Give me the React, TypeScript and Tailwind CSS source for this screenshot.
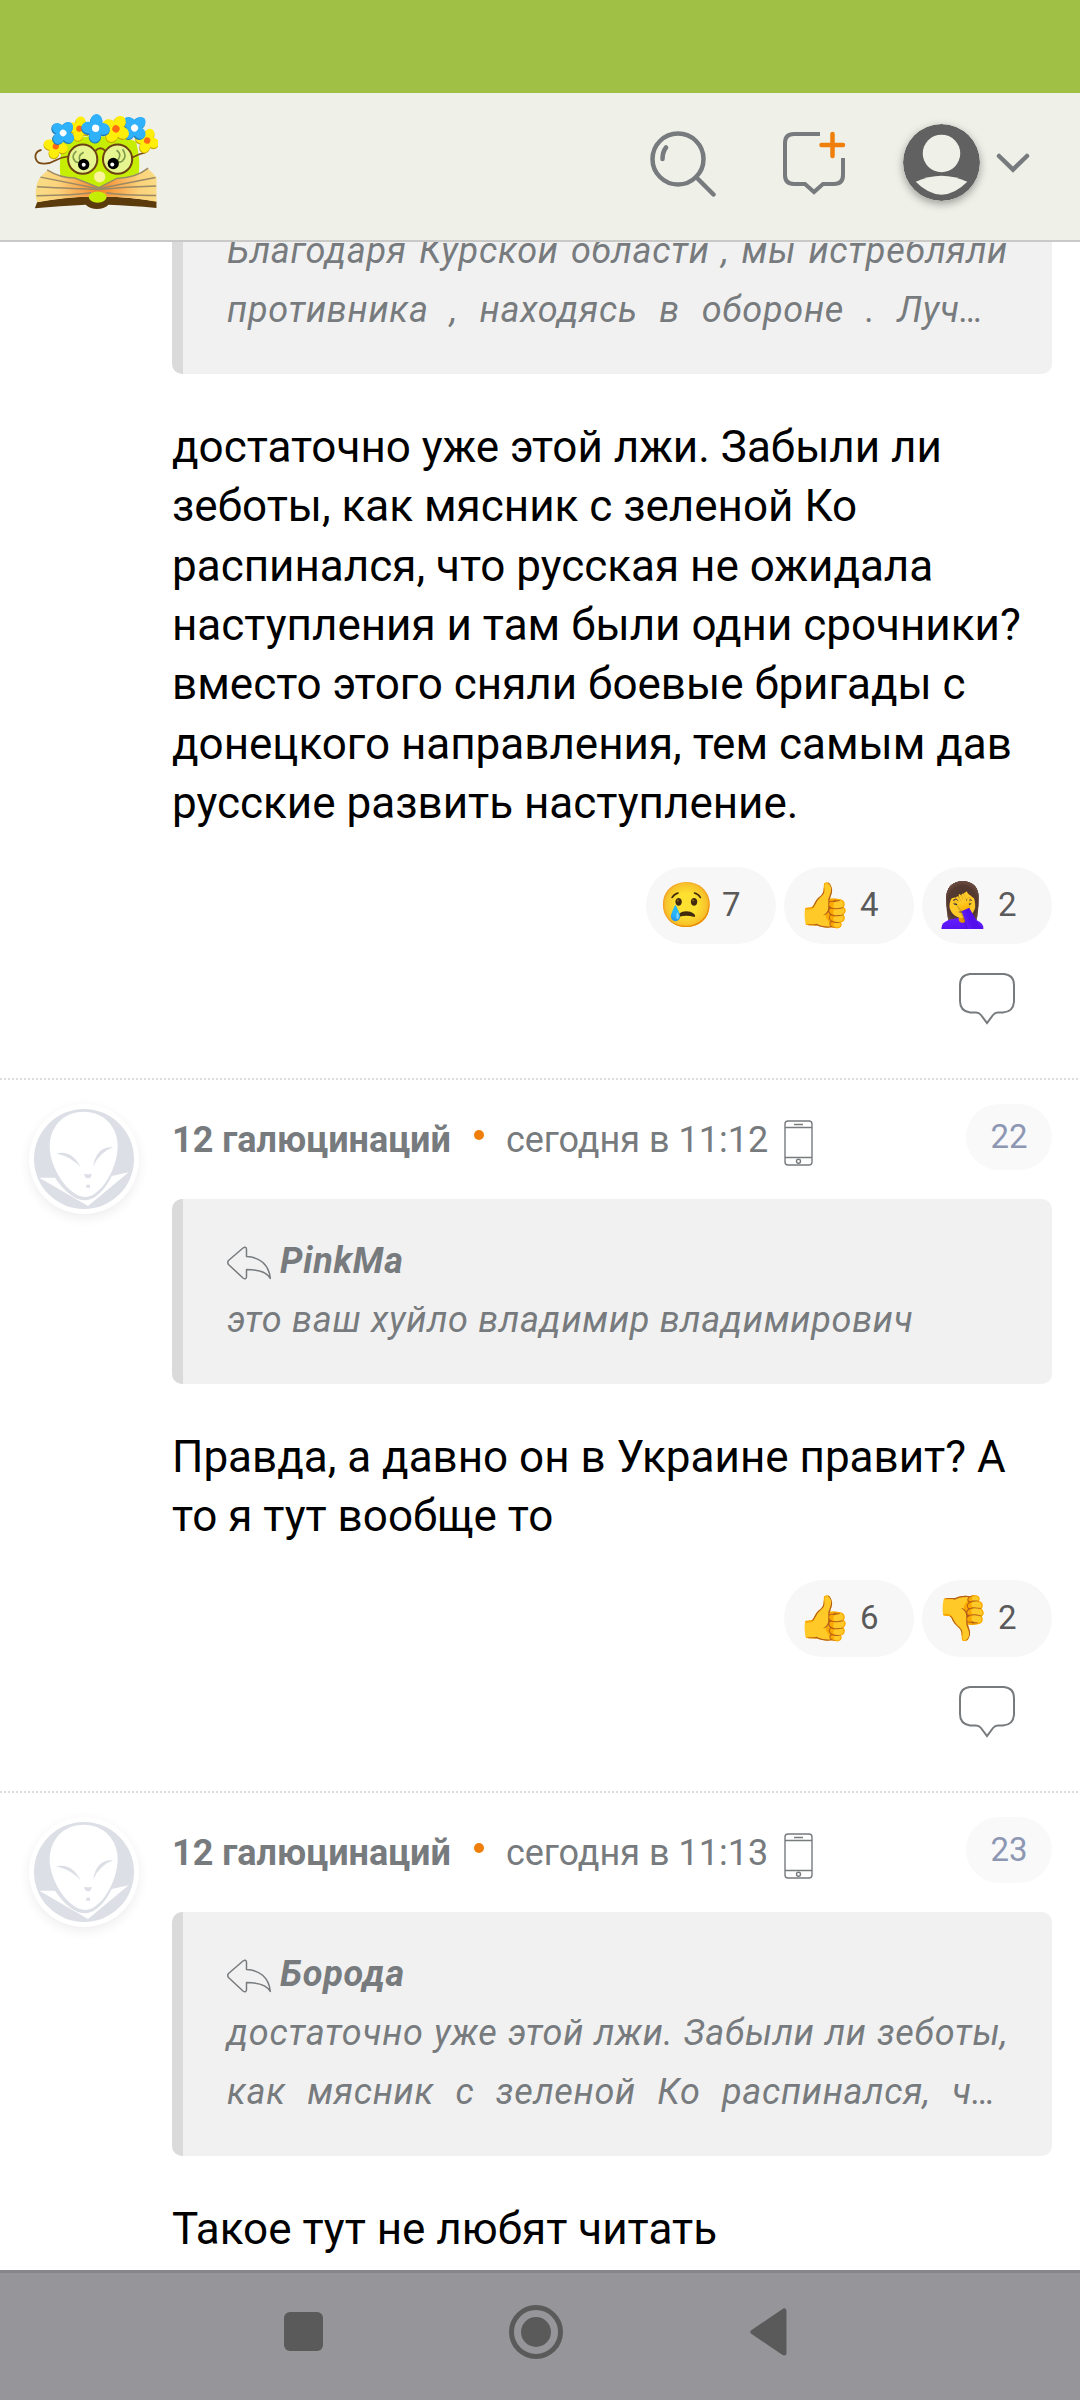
import React from "react";

type Reaction = { emoji: string; count: number };

const Logo = () => {
  const flowers = [
    { x: 168, y: 198, c: "#ffee0a", e: "#c9a800", m: "#ff6a13", r: 15, s: 0.95 },
    { x: 239, y: 145, c: "#ffee0a", e: "#c9a800", m: "#ff6a13", r: 10, s: 0.95 },
    { x: 443, y: 181, c: "#ffee0a", e: "#c9a800", m: "#ff6a13", r: 20, s: 0.95 },
    { x: 190, y: 158, c: "#2fb1fb", e: "#1c78b4", m: "#ffffff", r: 40, s: 1 },
    { x: 405, y: 143, c: "#2fb1fb", e: "#1c78b4", m: "#ffffff", r: 45, s: 1.05 },
    { x: 349, y: 146, c: "#ffee0a", e: "#c9a800", m: "#ff6a13", r: 30, s: 1.1 },
    { x: 288, y: 144, c: "#2fb1fb", e: "#1c78b4", m: "#ffffff", r: 5, s: 1.1 },
  ];
  return (
    <svg viewBox="100 95 375 295" className="h-[98px] w-[125px] shrink-0">
      <defs>
        <radialGradient id="page" gradientUnits="userSpaceOnUse" cx="298" cy="325" r="175">
          <stop offset="0" stopColor="#f58220" />
          <stop offset="0.3" stopColor="#f9a54c" />
          <stop offset="0.7" stopColor="#fbd27b" />
          <stop offset="1" stopColor="#fadb84" />
        </radialGradient>
      </defs>
      <path d="M182 295Q176 240 190 185Q220 168 300 168Q380 168 410 185Q424 240 417 290L300 335Z" fill="#c6ee05" />
      {/* book */}
      <path d="M105 385L112 366Q200 348 294 350Q380 348 471 364V384Q390 376 327 374Q312 387 292 387Q272 387 258 374Q180 378 105 385Z" fill="#5b3a0c" />
      <path d="M145 270Q112 292 110 318Q104 345 112 367Q200 349 298 350Q390 349 471 365V292Q462 280 445 265Q410 293 352 296L298 323L225 295Q180 292 145 270Z" fill="url(#page)" />
      <path
        d="M142 269Q180 293 225 294L298 323L352 295Q410 293 446 264M122 291L296 326L468 292M112 320Q230 326 298 328Q380 320 470 318M110 347Q230 345 275 338M470 346Q370 346 320 338"
        fill="none"
        stroke="#9a8a66"
        strokeWidth="4.5"
      />
      <ellipse cx="294" cy="351" rx="27" ry="17" fill="#c6ee05" />
      <circle cx="300" cy="290" r="17" fill="#fbf39b" />
      {/* glasses */}
      <path d="M125 209C108 212 102 228 110 241C118 255 148 252 168 240Q185 231 205 229" fill="none" stroke="#7a4b12" strokeWidth="5" />
      <path d="M400 231Q420 221 438 217" fill="none" stroke="#7a4b12" strokeWidth="5" />
      <path d="M287 212Q302 196 317 212" fill="none" stroke="#7a4b12" strokeWidth="6" />
      <circle cx="249" cy="237" r="44" fill="#e6f58f" stroke="#6b4012" strokeWidth="6" />
      <circle cx="354" cy="237" r="44" fill="#e6f58f" stroke="#6b4012" strokeWidth="6" />
      <path d="M230 213Q212 228 226 243Q232 249 240 246M252 216Q232 226 242 244M369 207Q384 228 368 243Q362 248 356 244M351 210Q368 222 355 240" fill="none" stroke="#7f9a4a" strokeWidth="5" />
      <circle cx="252" cy="253" r="17" />
      <circle cx="341" cy="250" r="17" />
      <circle cx="252" cy="254" r="6" fill="#fff" />
      <circle cx="338" cy="253" r="6" fill="#fff" />
      {flowers.map((f) => (
        <g key={f.x} transform={`translate(${f.x} ${f.y}) rotate(${f.r}) scale(${f.s})`}>
          {[0, 90, 180, 270].map((a) => (
            <ellipse key={a} cx="0" cy="-21" rx="17" ry="18" fill={f.e} transform={`translate(0 3) rotate(${a})`} />
          ))}
          {[0, 90, 180, 270].map((a) => (
            <ellipse key={a} cx="0" cy="-20" rx="16" ry="19" fill={f.c} transform={`rotate(${a})`} />
          ))}
          <circle r="10" fill={f.m} />
        </g>
      ))}
    </svg>
  );
};

const Bubble = () => (
  <svg viewBox="0 0 56 52" className="h-[52px] w-14" fill="none" stroke="#777b7e" strokeWidth="2">
    <path d="M11 1H45Q55 2 55 12V29Q54 39 44 39.500H39Q36 39.500 34 42L28 50L22 42Q20 39.500 17 39.500H11Q1 38 1 28V12Q1 2 11 1Z" />
  </svg>
);

const Quote = ({ author, children }: { author?: string; children: React.ReactNode }) => (
  <div className="overflow-hidden rounded-[10px] border-l-[11px] border-[#dadada] bg-[#f1f1f1] px-11 pt-[32.6px] pb-[33.4px] text-[36px] leading-[59.4px] tracking-[0.72px] text-[#777b7e] italic">
    {author && (
      <div className="flex items-center gap-[9px] font-bold">
        <svg viewBox="0 0 44 34" className="mt-1 h-[34px] w-11" fill="none" stroke="#777b7e" strokeWidth="1.5" strokeLinejoin="round">
          <path d="M1.500 14.500L16 2Q19 0 19.500 3V10.500C32 11 42 18 43.300 32.500C40 26 30 23.500 19.500 23.500V31Q19 34 16 32L1.500 18.500Q0 16.500 1.500 14.500Z" />
        </svg>
        {author}
      </div>
    )}
    {children}
  </div>
);

const Reactions = ({ items }: { items: Reaction[] }) => (
  <div className="mt-[33px] flex flex-col items-end">
    <div className="flex gap-2">
      {items.map((r) => (
        <div key={r.emoji} className="flex h-[77px] w-[130px] items-center rounded-full bg-[#f7f7f7] pl-[13px] text-[33px] text-[#5a5a5a]">
          <span className="w-[63px] font-['Noto_Color_Emoji'] text-[44px]">{r.emoji}</span>
          {r.count}
        </div>
      ))}
    </div>
    <div className="mt-[29px] mr-[37px] h-[52px]">
      <Bubble />
    </div>
  </div>
);

const Avatar = () => (
  <div className="mt-6 ml-[29px] size-[110px] shrink-0 rounded-full bg-white p-[5px] shadow-[0_4px_12px_rgba(0,0,0,0.07)]">
    <svg viewBox="0 0 300 300" className="size-[100px]">
      <circle cx="150" cy="150" r="150" fill="#dcdfe6" />
      <path d="M16 206H66Q110 274 154 274Q196 272 230 202L284 190L162 291Z" fill="#fff" />
      <path d="M149 8C210 8 251 54 251 112C251 178 200 264 154 264C104 264 47 178 47 112C47 54 88 8 149 8Z" fill="#fff" />
      <path d="M64 203Q108 269 154 269Q198 267 231 200" fill="none" stroke="#dcdfe6" strokeWidth="5" />
      <path d="M66 133Q114 122 140 175Q112 144 66 133ZM238 115Q188 110 177 173Q198 128 238 115ZM150 194Q162 198 173 194Q172 208 162 208Q152 206 150 194ZM157 227H168V236H157Z" fill="#dcdfe6" />
    </svg>
  </div>
);

const Comment = ({ time, num, children }: { time: string; num: number; children: React.ReactNode }) => (
  <article className="flex h-[711px] shrink-0">
    <Avatar />
    <div className="mt-6 ml-[33px] w-[880px]">
      <div className="flex h-[95px] items-start text-[36px] leading-[42px] text-[#777b7e]">
        <b className="mt-[15px]">12 галюцинаций</b>
        <span className="mt-[26px] ml-[23px] size-[10px] rounded-full bg-[#ef7f0a]" />
        <span className="mt-[15px] ml-[22px]">{time}</span>
        <svg viewBox="0 0 30 46" className="mt-4 ml-4 h-[46px] w-[30px]" fill="none" stroke="#777b7e" strokeWidth="1.400">
          <rect x="1" y="1" width="27" height="44" rx="3" />
          <path d="M1 7.500H28M1 37.500H28M10 4.500H19" />
          <circle cx="14.500" cy="41.300" r="2" />
        </svg>
        <span className="ml-auto flex h-[66px] w-[86px] items-center justify-center rounded-full bg-[#f9f9f9] text-[33px] text-[#8d97b3]">
          {num}
        </span>
      </div>
      {children}
    </div>
  </article>
);

const Line = ({ children }: { children: React.ReactNode }) => (
  <div className="whitespace-nowrap [text-align-last:justify]">{children}</div>
);

const Divider = () => (
  <div className="h-[2px] shrink-0 bg-[repeating-linear-gradient(90deg,#dcdcdc_0_2px,transparent_2px_4px)]" />
);

const App = () => {
  return (
    <div className="flex h-[2400px] w-[1080px] flex-col overflow-hidden bg-white font-[Roboto,sans-serif]">
      <div className="h-[93px] shrink-0 bg-[#9fc044]" />
      <header className="z-10 flex h-[149px] shrink-0 items-start border-b-2 border-[#c9cac7] bg-[#eff0e8] pl-[33px]">
        <div className="mt-[19px]">
          <Logo />
        </div>
        <svg viewBox="0 0 66 66" className="mt-[38px] ml-[492px] size-[66px]" fill="none" stroke="#777b7e" strokeWidth="4.500" strokeLinecap="round">
          <circle cx="28" cy="28" r="25.500" />
          <path d="M46 46L63.500 63.500M12.500 28Q12.500 21 16 16.500" />
        </svg>
        <svg viewBox="0 0 64 66" className="mt-[38px] ml-[66px] h-[66px] w-16" fill="none" stroke="#777b7e" strokeWidth="4">
          <path d="M38 3H12Q3 3 3 12V44Q3 53 12 53H23L32 61L41 53H52Q61 53 61 44V27" />
          <path d="M50.500 3V25M39.500 14H61" stroke="#ef7f0a" strokeWidth="4.500" strokeLinecap="round" />
        </svg>
        <svg viewBox="0 0 76 76" className="mt-[31px] ml-[57px] size-[77px] rounded-full shadow-[0_3px_8px_rgba(0,0,0,0.35)]">
          <circle cx="38" cy="38" r="38" fill="#616161" />
          <circle cx="38" cy="29" r="18.500" fill="#eff0e8" />
          <path d="M12.500 57Q38 45 63.500 57Q38 82.500 12.500 57Z" fill="#eff0e8" />
        </svg>
        <svg viewBox="0 0 34 22" className="mt-[59px] ml-[16px] h-[22px] w-[34px]" fill="none" stroke="#777b7e" strokeWidth="4.500" strokeLinecap="round">
          <path d="M3 4L17 17.500L31 4" />
        </svg>
      </header>

      <main className="flex flex-1 flex-col overflow-hidden">
        <div className="mt-[-53px] ml-[172px] h-[889px] w-[880px] shrink-0">
          <Quote>
            <Line>Благодаря Курской области , мы истребляли</Line>
            <div className="w-[757px]">
              <Line>противника , находясь в обороне . Луч…</Line>
            </div>
          </Quote>
          <p className="mt-11 text-[44px] leading-[59.4px] whitespace-nowrap">
            достаточно уже этой лжи. Забыли ли
            <br />
            зеботы, как мясник с зеленой Ко
            <br />
            распинался, что русская не ожидала
            <br />
            наступления и там были одни срочники?
            <br />
            вместо этого сняли боевые бригады с
            <br />
            донецкого направления, тем самым дав
            <br />
            русские развить наступление.
          </p>
          <Reactions items={[{ emoji: "😢", count: 7 }, { emoji: "👍", count: 4 }, { emoji: "🤦‍♀️", count: 2 }]} />
        </div>

        <Divider />
        <Comment time="сегодня в 11:12" num={22}>
          <Quote author="PinkMa">
            <div>это ваш хуйло владимир владимирович</div>
          </Quote>
          <p className="mt-11 text-[44px] leading-[59.4px] whitespace-nowrap">
            Правда, а давно он в Украине правит? А
            <br />
            то я тут вообще то
          </p>
          <Reactions items={[{ emoji: "👍", count: 6 }, { emoji: "👎", count: 2 }]} />
        </Comment>
        <Divider />
        <Comment time="сегодня в 11:13" num={23}>
          <Quote author="Борода">
            <Line>достаточно уже этой лжи. Забыли ли зеботы,</Line>
            <div className="w-[769px]">
              <Line>как мясник с зеленой Ко распинался, ч…</Line>
            </div>
          </Quote>
          <p className="mt-11 text-[44px] leading-[59.4px] whitespace-nowrap">Такое тут не любят читать</p>
        </Comment>
      </main>

      <nav className="flex h-[130px] shrink-0 items-start border-t-[3px] border-[#86878b] bg-[#969599]">
        <span className="mt-[39px] ml-[284px] size-[39px] rounded-[6px] bg-[#5a5a5a]" />
        <svg viewBox="0 0 54 54" className="mt-8 ml-[186px] size-[54px]">
          <circle cx="27" cy="27" r="24.500" fill="none" stroke="#5a5a5a" strokeWidth="5" />
          <circle cx="27" cy="27" r="15" fill="#5a5a5a" />
        </svg>
        <svg viewBox="0 0 38 48" className="mt-[35px] ml-[187px] h-12 w-[38px]">
          <path d="M3 24L34 3V45Z" fill="#5a5a5a" stroke="#5a5a5a" strokeWidth="5" strokeLinejoin="round" />
        </svg>
      </nav>
    </div>
  );
};

export default App;
